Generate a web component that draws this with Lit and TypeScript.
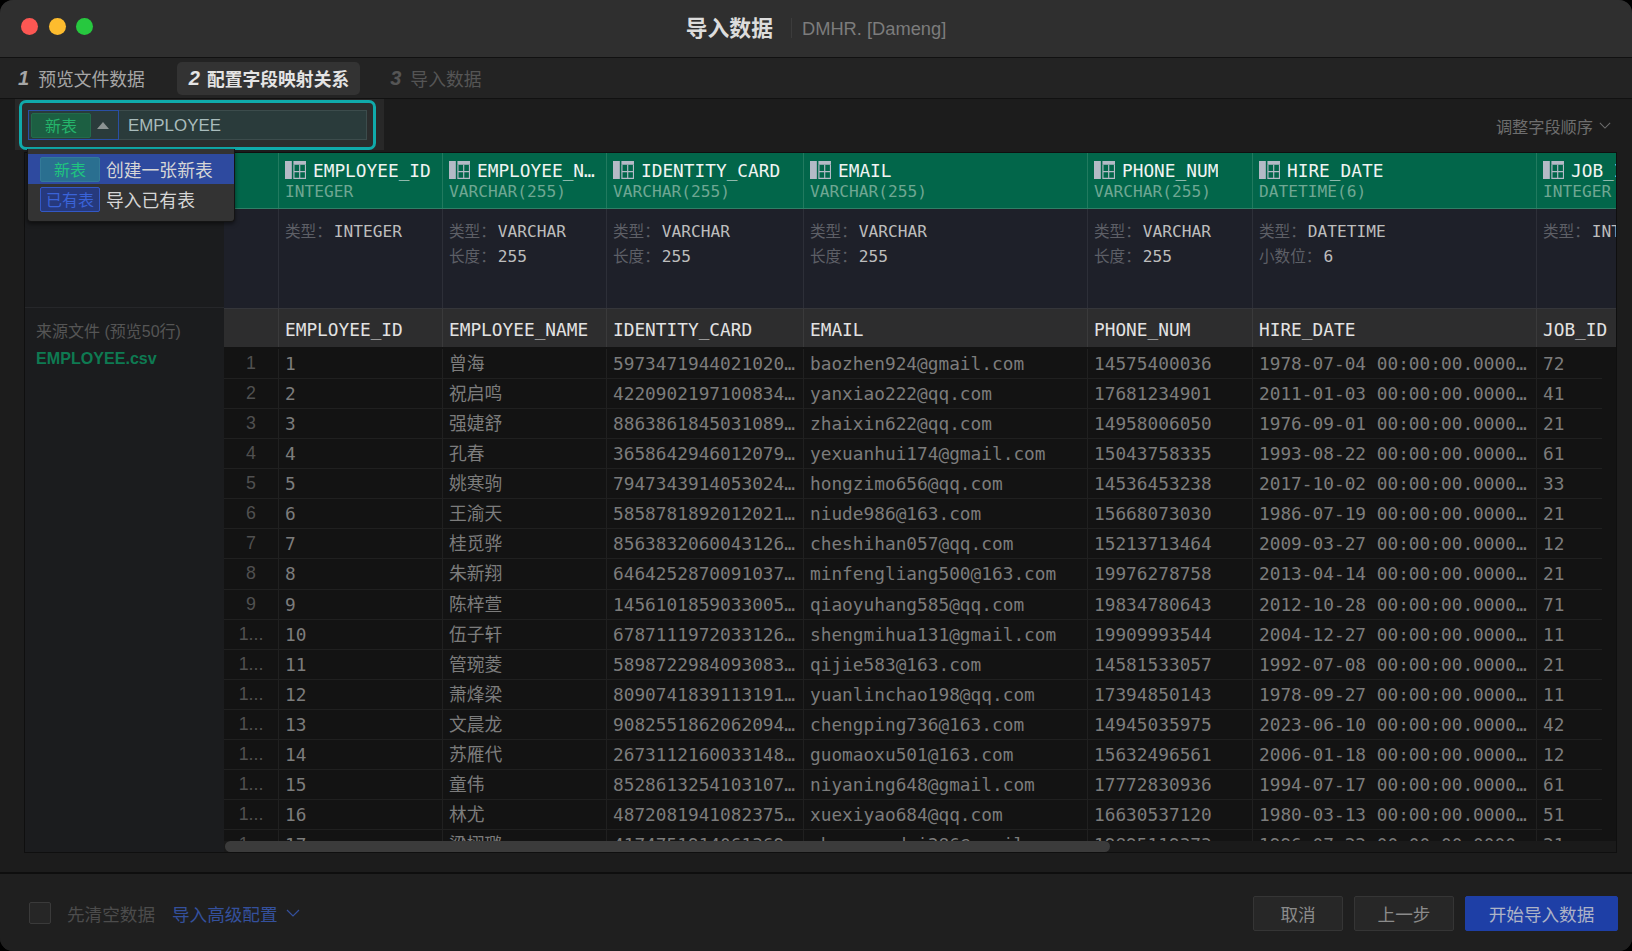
import { LitElement, html, css, svg } from "lit";
import { customElement } from "lit/decorators.js";

const COLS = [
  { name: "EMPLOYEE_ID", type: "INTEGER", base: "INTEGER", extra: "" },
  { name: "EMPLOYEE_NAME", type: "VARCHAR(255)", base: "VARCHAR", extra: "长度：|255" },
  { name: "IDENTITY_CARD", type: "VARCHAR(255)", base: "VARCHAR", extra: "长度：|255" },
  { name: "EMAIL", type: "VARCHAR(255)", base: "VARCHAR", extra: "长度：|255" },
  { name: "PHONE_NUM", type: "VARCHAR(255)", base: "VARCHAR", extra: "长度：|255" },
  { name: "HIRE_DATE", type: "DATETIME(6)", base: "DATETIME", extra: "小数位：|6" },
  { name: "JOB_ID", type: "INTEGER", base: "INTEGER", extra: "" },
];

const RAW = `曾海 5973471944021020 baozhen924@gmail.com 14575400036 1978-07-04 72
祝启鸣 4220902197100834 yanxiao222@qq.com 17681234901 2011-01-03 41
强婕舒 8863861845031089 zhaixin622@qq.com 14958006050 1976-09-01 21
孔春 3658642946012079 yexuanhui174@gmail.com 15043758335 1993-08-22 61
姚寒驹 7947343914053024 hongzimo656@qq.com 14536453238 2017-10-02 33
王渝天 5858781892012021 niude986@163.com 15668073030 1986-07-19 21
桂觅骅 8563832060043126 cheshihan057@qq.com 15213713464 2009-03-27 12
朱新翔 6464252870091037 minfengliang500@163.com 19976278758 2013-04-14 21
陈梓萱 1456101859033005 qiaoyuhang585@qq.com 19834780643 2012-10-28 71
伍子轩 6787111972033126 shengmihua131@gmail.com 19909993544 2004-12-27 11
管琬菱 5898722984093083 qijie583@163.com 14581533057 1992-07-08 21
萧烽梁 8090741839113191 yuanlinchao198@qq.com 17394850143 1978-09-27 11
文晨龙 9082551862062094 chengping736@163.com 14945035975 2023-06-10 42
苏雁代 2673112160033148 guomaoxu501@163.com 15632496561 2006-01-18 12
童伟 8528613254103107 niyaning648@gmail.com 17772830936 1994-07-17 61
林尤 4872081941082375 xuexiyao684@qq.com 16630537120 1980-03-13 51
梁栩璐 4174751914061369 zhongyandai386@gmail.com 19895119373 1996-07-22 21`;

const ROWS = RAW.split("\n").map((l, i) => {
  const [name, id, email, phone, date, job] = l.split(" ");
  return { n: i + 1, name, id: id + "12", email, phone, date: date + " 00:00:00.000000", job };
});

const tableIcon = svg`<path fill="currentColor" d="M0 0h6.5v17H0zM8 0h12v3.5H8z"/><path fill="none" stroke="currentColor" stroke-width="1.1" d="M8.5 3.5v13h11v-13M8.5 10h11M14 3.5v13"/>`;

@customElement("app-root")
export class AppRoot extends LitElement {
  static styles = css`
    :host {
      display: block;
      width: 1632px;
      height: 951px;
      background: #000;
      --cols: 55px 164px 164px 197px 284px 165px 284px 164px;
      font-family: "Liberation Sans", "Noto Sans CJK SC", sans-serif;
    }
    * { box-sizing: border-box; }
    .window {
      width: 1632px;
      height: 951px;
      border-radius: 13px;
      overflow: hidden;
      display: flex;
      flex-direction: column;
      background: #1e1e1e;
    }
    .titlebar {
      position: relative;
      height: 58px;
      flex: none;
      background: #2f2f2f;
      border-bottom: 1px solid #111;
      display: flex;
      align-items: center;
      justify-content: center;
      padding-bottom: 2px;
    }
    .lights {
      position: absolute;
      left: 21px;
      top: 18px;
      display: flex;
      gap: 10.5px;
    }
    .light { width: 17px; height: 17px; border-radius: 50%; }
    .red { background: #fc5753; }
    .yellow { background: #fdbc2e; }
    .green { background: #27c83f; }
    .title { font-size: 21.8px; font-weight: 700; color: #dcdcdc; margin-top: -3px; }
    .sep { width: 1px; height: 20px; background: #3c3c3c; margin: 0 10px 0 18px; }
    .db { font-size: 18.3px; color: #7c7c7c; margin-top: 2px; }
    .tabs {
      height: 41px;
      flex: none;
      background: #232323;
      border-bottom: 1px solid #111;
      display: flex;
      align-items: center;
      padding: 0 0 0 6px;
      font-size: 17.8px;
      color: #a6a6a6;
    }
    .tab {
      height: 33px;
      display: flex;
      align-items: center;
      gap: 9px;
      padding: 0 12px;
      border-radius: 5px;
    }
    .tab i { font-size: 20px; font-weight: 700; font-style: italic; font-family: "Liberation Sans", sans-serif; }
    .tab.on { background: #333; color: #e4e4e4; font-weight: 700; gap: 7px; margin-left: 20px; padding-right: 11px; }
    .tab.off { color: #555; padding-left: 0; margin-left: 30px; }
    .content {
      flex: 1;
      min-height: 0;
      display: flex;
      flex-direction: column;
      padding: 0 15px 19px 24px;
      border-bottom: 1px solid #0e0e0e;
      background: #1c1c1c;
    }
    .toolbar {
      height: 53px;
      flex: none;
      display: flex;
      align-items: center;
      justify-content: space-between;
      margin-left: -9px;
    }
    .picker-wrap {
      position: relative;
      width: 369px;
      height: 51px;
      align-self: flex-start;
      background: #282828;
      padding: 1px 8px 0 4px;
      z-index: 5;
    }
    .focus {
      height: 50px;
      border: 3px solid #10aaaa;
      border-radius: 7px;
      padding: 7px 6px 7px 6px;
      background: #2b2d2d;
    }
    .input {
      height: 30px;
      display: flex;
      align-items: stretch;
      background: #2a3b3b;
      border: 1px solid #3c4c4c;
    }
    .select {
      width: 91px;
      margin: -1px 0 -1px -1px;
      border: 1px solid #2a4fa5;
      display: flex;
      align-items: center;
      padding-left: 2px;
      gap: 6px;
    }
    .tag {
      flex: none;
      width: 60px;
      height: 25px;
      display: flex;
      align-items: center;
      justify-content: center;
      font-size: 16px;
      border-radius: 2px;
      color: #25b56b;
      background: #1c5f42;
      border: 1px solid #226b4b;
    }
    .caret {
      width: 0;
      height: 0;
      border-left: 6px solid transparent;
      border-right: 6px solid transparent;
      border-bottom: 7px solid #8b9393;
    }
    .name { padding-left: 9px; font-size: 16.9px; line-height: 30px; color: #a9bcbc; }
    .menu {
      position: absolute;
      left: 12px;
      top: 50px;
      width: 208px;
      height: 73px;
      background: #333;
      border: 1px solid #141414;
      border-top: none;
      border-radius: 0 0 4px 4px;
      padding-top: 5px;
      box-shadow: 0 2px 4px rgba(0, 0, 0, 0.5);
    }
    .opt {
      height: 30px;
      display: flex;
      align-items: center;
      gap: 6px;
      padding-left: 12px;
      font-size: 17.8px;
      color: #d6d6d6;
    }
    .opt.sel { background: #2e4a9f; }
    .opt.sel .tag { background: #2a6f90; border-color: #337a98; color: #1fc57f; }
    .opt .tag.blue { background: #26397d; border-color: #3358c6; color: #3a63d8; }
    .order {
      display: flex;
      align-items: center;
      gap: 6px;
      font-size: 16.2px;
      color: #6e6e6e;
      padding-right: 6px;
    }
    .chev { display: block; fill: none; stroke: currentColor; stroke-width: 1.2; }
    .frame {
      flex: 1;
      min-height: 0;
      display: flex;
      border: 1px solid #0f0f0f;
      background: #1b1c1e;
    }
    .left { width: 199px; flex: none; }
    .left-top { height: 155px; border-bottom: 1px solid #26272a; }
    .left-body { padding: 12px 11px; }
    .src { font-size: 16px; line-height: 24px; color: #555; }
    .file { font-size: 16.1px; line-height: 29px; font-weight: 700; color: #0e7a52; }
    .table {
      position: relative;
      flex: 1;
      min-width: 0;
      overflow: hidden;
      display: flex;
      flex-direction: column;
      font-family: "DejaVu Sans Mono", "Noto Sans CJK SC", monospace;
    }
    .grid { display: grid; grid-template-columns: var(--cols); flex: none; }
    .heads { height: 56px; background: #02664a; border-bottom: 1px solid #2f7f66; }
    .heads > div { border-right: 1px solid #217a5f; padding: 5px 7px 0 6px; min-width: 0; overflow: hidden; }
    .hname {
      display: flex;
      align-items: center;
      gap: 7px;
      height: 24px;
      font-size: 17.8px;
      color: #f0f4f2;
      white-space: nowrap;
    }
    .hname svg { flex: none; width: 21px; height: 18px; color: #b4bac6; }
    .hname span { overflow: hidden; text-overflow: ellipsis; min-width: 0; }
    .htype { font-size: 16.2px; line-height: 20px; color: #6fa793; white-space: nowrap; }
    .types { height: 100px; background: #1e2029; border-bottom: 1px solid #35363a; }
    .types > div { border-right: 1px solid #2d2f38; padding: 11px 0 0 6px; overflow: hidden; white-space: nowrap; }
    .kv { height: 24.5px; line-height: 24.5px; font-size: 16.2px; color: #bdbdbd; }
    .kv b { font-weight: 400; color: #5d5f66; font-size: 15.6px; margin-right: 2px; }
    .header { height: 38px; background: #2d2d2e; }
    .header > div {
      border-right: 1px solid #3a3a3b;
      padding: 2px 0 0 6px;
      line-height: 38px;
      font-size: 17.8px;
      color: #e2e2e2;
      white-space: nowrap;
      overflow: hidden;
    }
    .body { flex: 1; min-height: 0; overflow: hidden; background: #131313; padding-top: 2px; }
    .scrollgap { height: 11px; flex: none; background: #1a1a1a; }
    .row { height: 30.07px; width: 1378px; grid-template-columns: 55px 164px 164px 197px 284px 165px 284px 65px; border-bottom: 1px solid #202020; }
    .row > div {
      border-right: 1px solid #202020;
      padding: 0 6px;
      line-height: 29px;
      font-size: 17.8px;
      color: #7c7c7c;
      white-space: nowrap;
      overflow: hidden;
      text-overflow: ellipsis;
      min-width: 0;
    }
    .row > div:last-child { border-right: none; }
    .row > .num { font-family: "Liberation Sans", sans-serif; color: #505050; text-align: center; padding: 0; }
    .thumb {
      position: absolute;
      left: 1px;
      bottom: 0;
      width: 885px;
      height: 11px;
      border-radius: 6px;
      background: #3b3b3b;
    }
    .footer {
      height: 78px;
      flex: none;
      display: flex;
      align-items: center;
      padding: 1px 14px 0 29px;
      font-size: 17.6px;
      background: #1f1f1f;
      border-top: 1px solid #0e0e0e;
    }
    .check { width: 22px; height: 22px; border: 1px solid #3a3a3a; border-radius: 2px; background: #262626; margin-right: 16px; }
    .clear { color: #4c4c4c; margin-right: 17px; }
    .adv { color: #34509c; display: flex; align-items: center; gap: 8px; }
    .spacer { flex: 1; }
    .btn {
      height: 35px;
      display: flex;
      align-items: center;
      justify-content: center;
      border: 1px solid #353535;
      border-radius: 2px;
      background: #272727;
      color: #8b8b8b;
      margin-left: 11px;
    }
    .w90 { width: 90px; }
    .w100 { width: 100px; }
    .primary { width: 153px; background: #1e3fa6; border-color: #1e3fa6; color: #adb3c6; }
  `;

  private chevron(w: number, h: number) {
    return html`<svg class="chev" width=${w} height=${h} viewBox="0 0 14 8"><path d="M1 1l6 6 6-6" /></svg>`;
  }

  render() {
    return html`
      <div class="window">
        <div class="titlebar">
          <div class="lights">
            <div class="light red"></div>
            <div class="light yellow"></div>
            <div class="light green"></div>
          </div>
          <div class="title">导入数据</div>
          <div class="sep"></div>
          <div class="db">DMHR. [Dameng]</div>
        </div>
        <div class="tabs">
          <div class="tab"><i>1</i>预览文件数据</div>
          <div class="tab on"><i>2</i>配置字段映射关系</div>
          <div class="tab off"><i>3</i>导入数据</div>
        </div>
        <div class="content">
          <div class="toolbar">
            <div class="picker-wrap">
              <div class="focus">
                <div class="input">
                  <div class="select"><span class="tag">新表</span><span class="caret"></span></div>
                  <div class="name">EMPLOYEE</div>
                </div>
              </div>
              <div class="menu">
                <div class="opt sel"><span class="tag">新表</span>创建一张新表</div>
                <div class="opt"><span class="tag blue">已有表</span>导入已有表</div>
              </div>
            </div>
            <div class="order">调整字段顺序 ${this.chevron(12, 7)}</div>
          </div>
          <div class="frame">
            <div class="left">
              <div class="left-top"></div>
              <div class="left-body">
                <div class="src">来源文件 (预览50行)</div>
                <div class="file">EMPLOYEE.csv</div>
              </div>
            </div>
            <div class="table">
              <div class="grid heads">
                <div></div>
                ${COLS.map(
                  (c) => html`<div>
                    <div class="hname">
                      <svg viewBox="0 0 20 17">${tableIcon}</svg><span>${c.name}</span>
                    </div>
                    <div class="htype">${c.type}</div>
                  </div>`
                )}
              </div>
              <div class="grid types">
                <div></div>
                ${COLS.map((c) => {
                  const [k, v] = c.extra.split("|");
                  return html`<div>
                    <div class="kv"><b>类型：</b>${c.base}</div>
                    ${c.extra ? html`<div class="kv"><b>${k}</b>${v}</div>` : ""}
                  </div>`;
                })}
              </div>
              <div class="grid header">
                <div></div>
                ${COLS.map((c) => html`<div>${c.name}</div>`)}
              </div>
              <div class="body">
                ${ROWS.map(
                  (r) => html`<div class="grid row">
                    <div class="num">${r.n < 10 ? r.n : "1..."}</div>
                    <div>${r.n}</div>
                    <div>${r.name}</div>
                    <div>${r.id}</div>
                    <div>${r.email}</div>
                    <div>${r.phone}</div>
                    <div>${r.date}</div>
                    <div>${r.job}</div>
                  </div>`
                )}
              </div>
              <div class="scrollgap"></div>
              <div class="thumb"></div>
            </div>
          </div>
        </div>
        <div class="footer">
          <div class="check"></div>
          <div class="clear">先清空数据</div>
          <div class="adv">导入高级配置 ${this.chevron(14, 8)}</div>
          <div class="spacer"></div>
          <div class="btn w90">取消</div>
          <div class="btn w100">上一步</div>
          <div class="btn primary">开始导入数据</div>
        </div>
      </div>
    `;
  }
}
